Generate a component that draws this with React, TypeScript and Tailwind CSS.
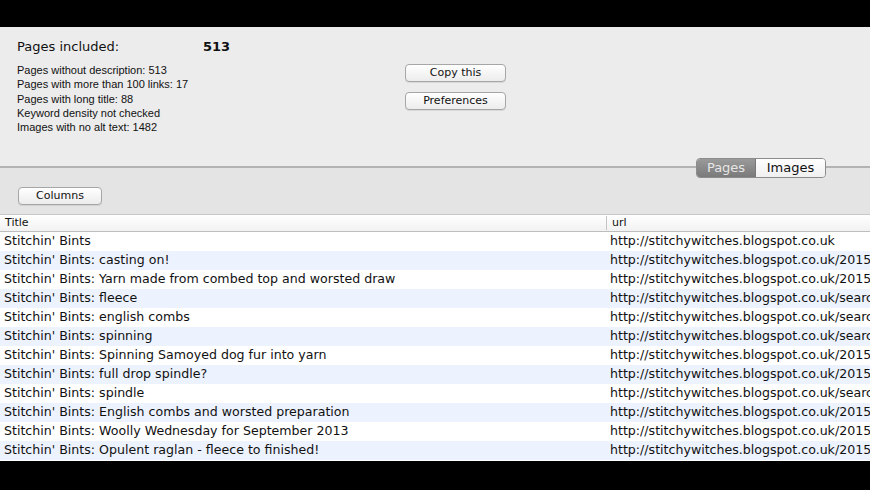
import React from "react";

const stats = [
  "Pages without description: 513",
  "Pages with more than 100 links: 17",
  "Pages with long title: 88",
  "Keyword density not checked",
  "Images with no alt text: 1482",
];

const rows: [string, string][] = [
  ["Stitchin' Bints", "http://stitchywitches.blogspot.co.uk"],
  ["Stitchin' Bints: casting on!", "http://stitchywitches.blogspot.co.uk/2015/"],
  ["Stitchin' Bints: Yarn made from combed top and worsted draw", "http://stitchywitches.blogspot.co.uk/2015"],
  ["Stitchin' Bints: fleece", "http://stitchywitches.blogspot.co.uk/search"],
  ["Stitchin' Bints: english combs", "http://stitchywitches.blogspot.co.uk/search"],
  ["Stitchin' Bints: spinning", "http://stitchywitches.blogspot.co.uk/search"],
  ["Stitchin' Bints: Spinning Samoyed dog fur into yarn", "http://stitchywitches.blogspot.co.uk/2015"],
  ["Stitchin' Bints: full drop spindle?", "http://stitchywitches.blogspot.co.uk/2015"],
  ["Stitchin' Bints: spindle", "http://stitchywitches.blogspot.co.uk/search"],
  ["Stitchin' Bints: English combs and worsted preparation", "http://stitchywitches.blogspot.co.uk/2015/"],
  ["Stitchin' Bints: Woolly Wednesday for September 2013", "http://stitchywitches.blogspot.co.uk/2015"],
  ["Stitchin' Bints: Opulent raglan - fleece to finished!", "http://stitchywitches.blogspot.co.uk/2015"],
];

const MacButton = ({ label, className }: { label: string; className: string }) => (
  <div
    className={`h-[18px] rounded-[4px] border border-[#a6a6a6] bg-gradient-to-b from-white to-[#ececec] flex items-center justify-center text-[11px] text-[#111] shadow-[0_1px_0_rgba(0,0,0,0.08)] ${className}`}
    style={{ fontFamily: '"DejaVu Sans", sans-serif' }}
  >
    {label}
  </div>
);

export default function App() {
  return (
    <div className="w-[870px] h-[490px] bg-black flex flex-col overflow-hidden">
      <div className="h-[27px] shrink-0" />

      {/* Summary panel */}
      <div className="relative h-[141px] shrink-0 bg-[#ececec] border-b-2 border-[#b3b3b3] flex">
        <div className="pl-[17px] pt-[12px] w-[405px]">
          <div
            className="flex items-center h-[16px] text-[13px] text-[#111]"
            style={{ fontFamily: '"DejaVu Sans", sans-serif' }}
          >
            <span className="w-[186px]">Pages included:</span>
            <span className="font-bold">513</span>
          </div>
          <div
            className="mt-[8px] text-[11px] leading-[14.3px] text-[#111]"
            style={{ fontFamily: '"Liberation Sans", Arial, sans-serif' }}
          >
            {stats.map((s) => (
              <div key={s}>{s}</div>
            ))}
          </div>
        </div>
        <div className="flex flex-col gap-[10px] pt-[37px]">
          <MacButton label="Copy this" className="w-[101px]" />
          <MacButton label="Preferences" className="w-[101px]" />
        </div>

        {/* segmented control on the divider */}
        <div
          className="absolute right-[44px] bottom-[-12px] flex h-[20px] rounded-[4px] border border-[#8c8c8c] overflow-hidden text-[13px]"
          style={{ fontFamily: '"DejaVu Sans", sans-serif' }}
        >
          <div className="w-[59px] bg-gradient-to-b from-[#9a9a9a] to-[#7a7a7a] text-[#e6e6e6] flex items-center justify-center border-r border-[#777]">
            Pages
          </div>
          <div className="w-[69px] bg-gradient-to-b from-white to-[#f0f0f0] text-[#111] flex items-center justify-center">
            Images
          </div>
        </div>
      </div>

      {/* Toolbar */}
      <div className="h-[46px] shrink-0 bg-[#e4e4e4] pl-[18px] pt-[19px]">
        <MacButton label="Columns" className="w-[84px]" />
      </div>

      {/* Table */}
      <div
        className="shrink-0 bg-white pb-[1px]"
        style={{ fontFamily: '"DejaVu Sans", sans-serif' }}
      >
        <div className="h-[18px] flex items-center bg-gradient-to-b from-white to-[#f2f2f2] border-t border-[#c8c8c8] border-b border-b-[#bdbdbd] text-[11px] text-[#111]">
          <div className="w-[606px] pl-[5px]">Title</div>
          <div className="h-[14px] border-l border-[#c4c4c4] pl-[5px] leading-[14px]">url</div>
        </div>
        {rows.map(([title, url], i) => (
          <div
            key={i}
            className={`h-[19px] flex items-center text-[12.6px] text-[#111] whitespace-nowrap ${
              i % 2 === 1 ? "bg-[#edf3fe]" : "bg-white"
            }`}
          >
            <div className="w-[606px] pl-[4px] overflow-hidden">{title}</div>
            <div className="flex-1 pl-[4px] overflow-hidden">{url}</div>
          </div>
        ))}
      </div>
    </div>
  );
}
